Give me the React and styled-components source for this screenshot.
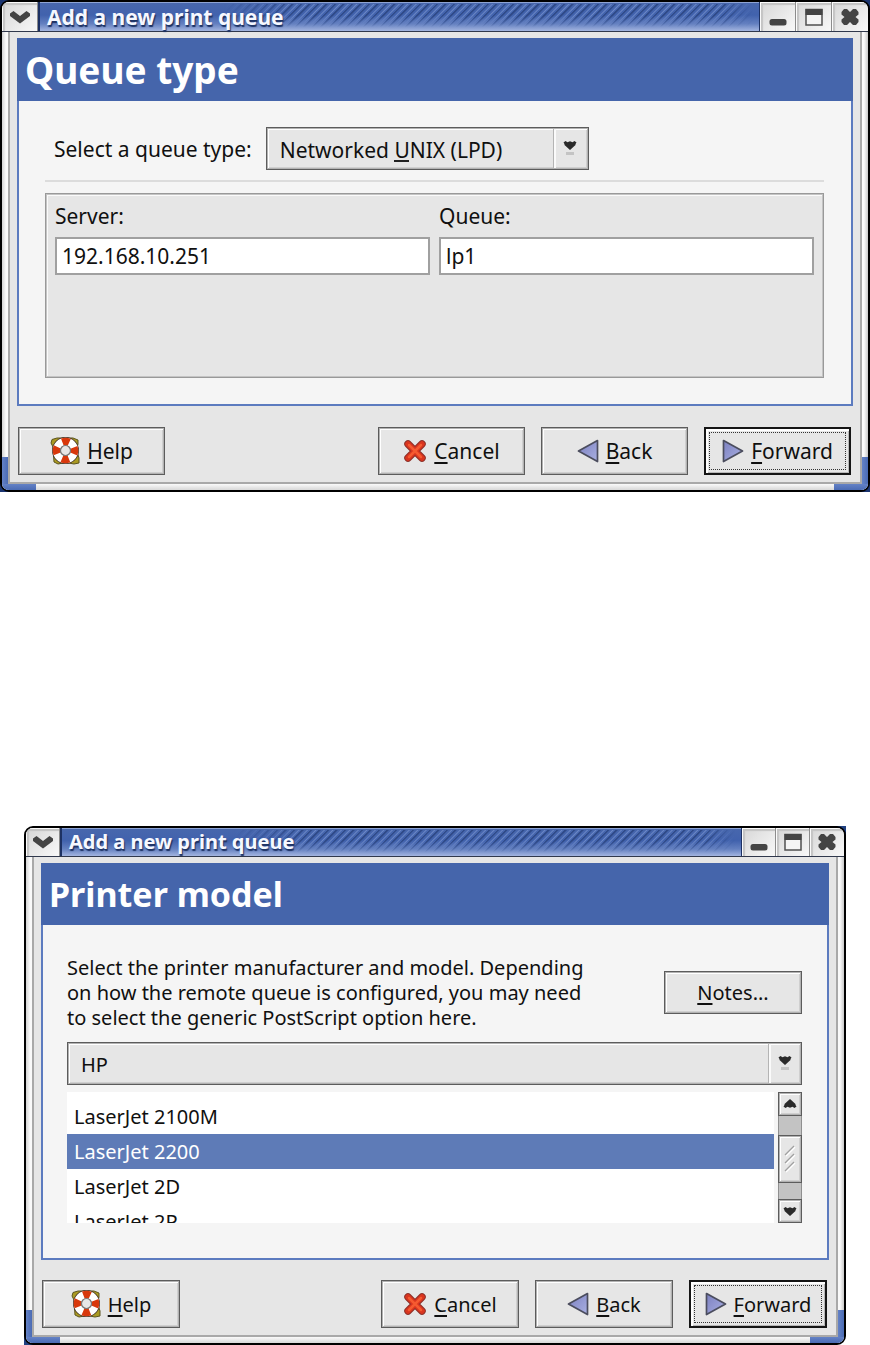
import React, { useId } from "react";
import styled, { createGlobalStyle, css, ThemeProvider } from "styled-components";

const GlobalStyle = createGlobalStyle`
  * {
    box-sizing: border-box;
  }
  body {
    margin: 0;
    background: #fff;
    color: #101010;
    font-family: "Noto Sans", "Open Sans", sans-serif;
  }
`;

const large = {
  text: 21,
  title: 21,
  heading: 37,
  titleBar: 29,
  windowButton: 36,
  header: 63,
  button: 147,
  arrow: 34,
  footerGap: 21,
};

const medium = {
  text: 20,
  title: 20,
  heading: 34,
  titleBar: 28,
  windowButton: 34,
  header: 62,
  button: 138,
  arrow: 32,
  footerGap: 20,
};

const bevel = css`
  border: 1px solid #5c5c5c;
  box-shadow: inset 0 0 0 1px #b2b2b2, inset 1px 1px 0 1px #fff,
    inset -1px -1px 0 1px #cfcfcf;
`;

const Page = styled.main`
  display: flex;
  flex-direction: column;
  gap: 334px;
`;

const Backdrop = styled.section`
  margin: 0 ${(p) => (p.$inset ? 24 : 0)}px;
  background: ${(p) =>
    p.$inset
      ? "linear-gradient(90deg, #fff 50%, #1f3f80 50%) top / 100% 50% no-repeat, linear-gradient(90deg, #1f3f80 50%, #fff 50%) bottom / 100% 50% no-repeat"
      : "#1a3470"};
`;

const Frame = styled.div`
  border: 2px solid #000;
  border-radius: 9px;
  overflow: hidden;
  background: #f2f2f2;
`;

const TitleBar = styled.header`
  display: flex;
  height: ${(p) => p.theme.titleBar}px;
`;

const Title = styled.h2`
  flex: 1;
  display: flex;
  align-items: center;
  margin: 0;
  padding-left: 7px;
  border: solid #1d3163;
  border-width: 0 1px 0 2px;
  box-shadow: inset 0 1px 0 #8ea4d4;
  background: linear-gradient(#4867ad, #4162ad 45%, #6480c0 75%, #a3b5e0);
  color: #f6f8ff;
  font-size: ${(p) => p.theme.title}px;
  line-height: 24px;
  text-shadow: 1px 2px 1px #1d3163;
  white-space: nowrap;
`;

const Stripes = styled.span`
  flex: 1;
  align-self: stretch;
  margin: 2px 6px 4px -60px;
  background: repeating-linear-gradient(
    135deg,
    #2f4a88 0 1px,
    transparent 2px 3px,
    #6c88c6 4px,
    transparent 5px 6px
  );
  mask-image: linear-gradient(90deg, transparent, #000 70px, #000 94%, transparent),
    linear-gradient(#000 50%, transparent);
  mask-composite: intersect;
`;

const TitleText = styled.span`
  position: relative;
  z-index: 1;
`;

const WindowButton = styled.button`
  display: grid;
  place-items: center;
  width: ${(p) => p.theme.windowButton}px;
  padding: 0;
  border: solid #8c8c8c;
  border-width: 0 1px 0 0;
  box-shadow: inset 1px 1px 0 #fbfbfb, inset 3px 3px 1px #c4c4c4;
  background: linear-gradient(135deg, #d6d6d6, #f8f8f8);

  &:last-child {
    border-right: 0;
  }
`;

const Sides = styled.div`
  padding: 0 6px 6px;
  border-top: 1px solid #30384c;
  background: linear-gradient(#6482c6, #4a6bb4) left bottom / 34px 6px no-repeat,
    linear-gradient(#6482c6, #4a6bb4) right bottom / 34px 6px no-repeat,
    linear-gradient(90deg, #6482c6, #4a6bb4) left bottom / 6px 33px no-repeat,
    linear-gradient(90deg, #6482c6, #4a6bb4) right bottom / 6px 33px no-repeat,
    linear-gradient(#fafafa, #d8d8d8) bottom / 100% 6px no-repeat,
    linear-gradient(90deg, #d4d4d4, #fafafa 4px, #ececec 50%, #fafafa calc(100% - 4px), #c8c8c8);
`;

const Client = styled.div`
  padding: 6px 7px 7px;
  border: solid #a9a9a9;
  border-width: 0 2px 2px;
  background: #e6e6e6;
`;

const Panel = styled.div`
  border: 2px solid #5c7bbf;
  background: #f5f5f5;
`;

const Heading = styled.h1`
  display: flex;
  align-items: center;
  height: ${(p) => p.theme.header}px;
  margin: -2px -2px 0;
  padding: 0 9px 0 8px;
  background: #4565ab;
  color: #fff;
  font-size: ${(p) => p.theme.heading}px;
  line-height: 48px;
`;

const QueueBody = styled.div`
  padding: 26px 27px 26px 26px;
`;

const FieldRow = styled.div`
  display: flex;
  align-items: center;
  gap: 14px;
  padding-left: 9px;
`;

const Label = styled.label`
  font-size: ${(p) => p.theme.text}px;
  line-height: 28px;
`;

const Rule = styled.hr`
  height: 2px;
  margin: 10px 0 11px;
  border: 0;
  background: #dcdcdc;
`;

const Group = styled.div`
  display: grid;
  grid-template-columns: 1fr 1fr;
  align-content: start;
  gap: 9px;
  min-height: 185px;
  padding: 8px 9px;
  border: 1px solid #999;
  box-shadow: inset 0 0 0 1px #c4c4c4, inset 1px 1px 0 1px #fafafa;
  background: #e6e6e6;
`;

const Field = styled.div`
  display: flex;
  flex-direction: column;
  gap: 7px;
`;

const TextInput = styled.input`
  width: 100%;
  height: 38px;
  padding: 0 5px;
  border: 2px solid #a0a0a0;
  border-radius: 0;
  background: #fff;
  color: inherit;
  font: inherit;
  font-size: ${(p) => p.theme.text}px;
`;

const SelectBox = styled.div`
  position: relative;
  width: ${(p) => (p.$wide ? "100%" : "323px")};
`;

const Select = styled.select`
  ${bevel}
  display: block;
  width: 100%;
  height: 43px;
  padding: 2px 40px 0 13px;
  border-radius: 0;
  appearance: none;
  background: #e6e6e6;
  color: inherit;
  font: inherit;
  font-size: ${(p) => p.theme.text}px;
`;

const SelectArrow = styled.span`
  position: absolute;
  top: 2px;
  right: 2px;
  bottom: 2px;
  display: grid;
  place-items: center;
  width: ${(p) => p.theme.arrow}px;
  border-left: 1px solid #b4b4b4;
  box-shadow: inset 2px 0 0 #fafafa;
  pointer-events: none;
`;

const Mnemonic = styled.span`
  position: absolute;
  left: 128px;
  bottom: 8px;
  width: 15px;
  height: 2px;
  background: #222;
  pointer-events: none;
`;

const Button = styled.button`
  ${bevel}
  display: flex;
  align-items: center;
  justify-content: center;
  gap: 7px;
  width: ${(p) => p.theme.button}px;
  height: ${(p) => p.$height || 48}px;
  padding: 0;
  background: #e6e6e6;
  color: inherit;
  font: inherit;
  font-size: ${(p) => p.theme.text}px;

  u {
    text-decoration-thickness: 2px;
    text-underline-offset: 3px;
  }

  ${(p) =>
    p.$focused &&
    css`
      border: 2px solid #151515;
      box-shadow: inset 2px 2px 0 #fff, inset -1px -1px 0 #b8b8b8;
      outline: 1px dotted #333;
      outline-offset: -6px;
    `}
`;

const Footer = styled.footer`
  display: flex;
  gap: 16px;
  padding: ${(p) => p.theme.footerGap}px 2px 0 1px;

  button:first-child {
    margin-right: auto;
  }
`;

const ModelBody = styled.div`
  padding: 30px 25px 35px 24px;
`;

const Intro = styled.div`
  display: flex;
  align-items: center;
  justify-content: space-between;
  margin-bottom: 12px;
`;

const Paragraph = styled.p`
  margin: 0;
  font-size: ${(p) => p.theme.text}px;
  line-height: 25px;
`;

const ListArea = styled.div`
  display: flex;
  gap: 4px;
  height: 131px;
  margin-top: 7px;
`;

const List = styled.ul`
  flex: 1;
  margin: 0;
  padding: 7px 0 0;
  overflow: hidden;
  background: #fff;
  list-style: none;
`;

const Item = styled.li`
  padding: 0 7px;
  background: ${(p) => (p.$selected ? "#5e7bb7" : "transparent")};
  color: ${(p) => (p.$selected ? "#fff" : "inherit")};
  font-size: ${(p) => p.theme.text}px;
  line-height: 35px;
`;

const Scrollbar = styled.div`
  display: flex;
  flex-direction: column;
  width: 24px;
  border: solid #8f8f8f;
  border-width: 0 1px;
  background: #c3c3c3;
`;

const ScrollButton = styled.button`
  ${bevel}
  display: grid;
  place-items: center;
  height: 24px;
  margin: 0 -1px;
  padding: 0;
  background: #e6e6e6;
`;

const Thumb = styled.div`
  ${bevel}
  display: grid;
  place-items: center;
  height: 48px;
  margin: 19px -1px auto;
  background: #e6e6e6;
`;

const MenuGlyph = () => (
  <svg width="24" height="16" viewBox="0 0 24 16" aria-hidden="true">
    <path d="M2 4.500 5.500 2l6.500 5L18.500 2 22 4.500v2.500L12 14.500 2 7z" fill="#444" />
  </svg>
);

const MinimizeGlyph = () => (
  <svg width="20" height="20" viewBox="0 0 20 20" aria-hidden="true">
    <rect x="1.500" y="12" width="17" height="6.500" rx="2.500" fill="#444" />
  </svg>
);

const MaximizeGlyph = () => (
  <svg width="20" height="20" viewBox="0 0 20 20" aria-hidden="true">
    <rect x="2" y="2.500" width="16" height="15.500" fill="#f4f4f4" stroke="#505050" strokeWidth="1.500" />
    <path d="M1.500 2h17v6h-17z" fill="#444" />
  </svg>
);

const CloseGlyph = () => (
  <svg width="20" height="20" viewBox="0 0 20 20" aria-hidden="true">
    <path
      d="M1.500 5 4 2h3l3 3 3-3h3l2.500 3v2.500L15.500 10l3 2.500V15L16 18h-3l-3-3-3 3H4l-2.500-3v-2.500l3-2.500-3-2.500z"
      fill="#444"
    />
  </svg>
);

const ArrowGlyph = ({ up }) => (
  <svg width="14" height="10" viewBox="0 0 14 10" aria-hidden="true">
    <path
      d={
        up
          ? "M7 0 1.500 5v1L.5 7.500 2.500 9l2-1.200L7 8.800l2.500-1 2 1.200 2-1.500-1-1.500V5z"
          : "M7 10 1.500 5V4L.5 2.500 2.500 1l2 1.200L7 1.200l2.500 1 2-1.200 2 1.500-1 1.500v1z"
      }
      fill="#2a2a2a"
    />
  </svg>
);

const SelectGlyph = () => (
  <svg width="14" height="22" viewBox="0 0 14 22" aria-hidden="true">
    <path d="M7 12 1.500 7V6L.5 4.500 2.500 3l2 1.200L7 3.200l2.500 1 2-1.200 2 1.500-1 1.500v1z" fill="#2a2a2a" />
    <path d="M3 14h8v3H3z" fill="#c4c4c4" />
  </svg>
);

const GripGlyph = () => (
  <svg width="14" height="30" viewBox="0 0 14 30" aria-hidden="true">
    <path d="m3 12 9-9M3 20l9-9M3 28l9-9" stroke="#fff" strokeWidth="1.500" />
    <path d="m2 11 9-9M2 19l9-9M2 27l9-9" stroke="#a0a0a0" strokeWidth="1.300" />
  </svg>
);

const HelpIcon = () => (
  <svg width="30" height="28" viewBox="0 0 30 28" aria-hidden="true">
    <path
      d="M2 2.500 7 1l16 0 5 2v4l-1.500 6L29 21v5l-5 1-8-1.500L8 27l-4-2-.5-7L4 12 1 6z"
      fill="#aa9a22"
      stroke="#5c5520"
    />
    <circle cx="15.500" cy="13.500" r="9" fill="none" stroke="#3b2a22" strokeWidth="9" />
    <circle cx="15.500" cy="13.500" r="9" fill="none" stroke="#fff" strokeWidth="7.500" />
    <circle
      cx="15.500"
      cy="13.500"
      r="9"
      fill="none"
      stroke="#d8380c"
      strokeWidth="7.500"
      strokeDasharray="7.070 7.070"
      strokeDashoffset="3.530"
    />
    <circle cx="15.500" cy="13.500" r="5" fill="#e6e6e6" stroke="#777" strokeWidth="1.200" />
  </svg>
);

const CancelIcon = () => (
  <svg width="24" height="24" viewBox="0 0 24 24" strokeLinecap="round" aria-hidden="true">
    <path d="m5 5 14 14M19 5 5 19" stroke="#8c3028" strokeWidth="7.500" />
    <path d="m5 5 14 14M19 5 5 19" stroke="#d9351f" strokeWidth="5.500" />
    <path d="m6 6 12 12M18 6 6 18" stroke="#f55a30" strokeWidth="2.500" />
  </svg>
);

const Triangle = ({ forward }) => {
  const id = useId();
  return (
    <svg width="22" height="24" viewBox="0 0 22 24" aria-hidden="true">
      <linearGradient id={id} x1="0" y1="0" x2="1" y2="1">
        <stop offset="0" stopColor="#7c80c0" />
        <stop offset="1" stopColor="#a9b0e2" />
      </linearGradient>
      <path
        d={forward ? "M1.500 1.500 20.500 12l-19 10.500z" : "M20.500 1.500 1.500 12l19 10.500z"}
        fill={`url(#${id})`}
        stroke="#4b4d5e"
        strokeWidth="1.700"
        strokeLinejoin="round"
      />
    </svg>
  );
};

const DialogWindow = ({ theme, inset, heading, children }) => (
  <ThemeProvider theme={theme}>
    <Backdrop $inset={inset}>
      <Frame>
        <TitleBar>
          <WindowButton aria-label="Window menu">
            <MenuGlyph />
          </WindowButton>
          <Title>
            <TitleText>Add a new print queue</TitleText>
            <Stripes />
          </Title>
          <WindowButton aria-label="Minimize">
            <MinimizeGlyph />
          </WindowButton>
          <WindowButton aria-label="Maximize">
            <MaximizeGlyph />
          </WindowButton>
          <WindowButton aria-label="Close">
            <CloseGlyph />
          </WindowButton>
        </TitleBar>
        <Sides>
          <Client>
            <Panel>
              <Heading>{heading}</Heading>
              {children}
            </Panel>
            <Footer>
              <Button>
                <HelpIcon />
                <span>
                  <u>H</u>elp
                </span>
              </Button>
              <Button>
                <CancelIcon />
                <span>
                  <u>C</u>ancel
                </span>
              </Button>
              <Button>
                <Triangle />
                <span>
                  <u>B</u>ack
                </span>
              </Button>
              <Button $focused>
                <Triangle forward />
                <span>
                  <u>F</u>orward
                </span>
              </Button>
            </Footer>
          </Client>
        </Sides>
      </Frame>
    </Backdrop>
  </ThemeProvider>
);

const models = ["LaserJet 2100M", "LaserJet 2200", "LaserJet 2D", "LaserJet 2P"];

const App = () => {
  return (
    <Page>
      <GlobalStyle />
      <DialogWindow theme={large} heading="Queue type">
        <QueueBody>
          <FieldRow>
            <Label htmlFor="queue-type">Select a queue type:</Label>
            <SelectBox>
              <Select id="queue-type">
                <option>Networked UNIX (LPD)</option>
              </Select>
              <Mnemonic />
              <SelectArrow>
                <SelectGlyph />
              </SelectArrow>
            </SelectBox>
          </FieldRow>
          <Rule />
          <Group>
            <Field>
              <Label htmlFor="server">Server:</Label>
              <TextInput id="server" defaultValue="192.168.10.251" />
            </Field>
            <Field>
              <Label htmlFor="queue">Queue:</Label>
              <TextInput id="queue" defaultValue="lp1" />
            </Field>
          </Group>
        </QueueBody>
      </DialogWindow>
      <DialogWindow theme={medium} inset heading="Printer model">
        <ModelBody>
          <Intro>
            <Paragraph>
              Select the printer manufacturer and model. Depending
              <br />
              on how the remote queue is configured, you may need
              <br />
              to select the generic PostScript option here.
            </Paragraph>
            <Button $height={43}>
              <span>
                <u>N</u>otes...
              </span>
            </Button>
          </Intro>
          <SelectBox $wide>
            <Select aria-label="Manufacturer">
              <option>HP</option>
            </Select>
            <SelectArrow>
              <SelectGlyph />
            </SelectArrow>
          </SelectBox>
          <ListArea>
            <List role="listbox" aria-label="Model">
              {models.map((model) => (
                <Item
                  key={model}
                  role="option"
                  aria-selected={model === "LaserJet 2200"}
                  $selected={model === "LaserJet 2200"}
                >
                  {model}
                </Item>
              ))}
            </List>
            <Scrollbar>
              <ScrollButton aria-label="Scroll up">
                <ArrowGlyph up />
              </ScrollButton>
              <Thumb>
                <GripGlyph />
              </Thumb>
              <ScrollButton aria-label="Scroll down">
                <ArrowGlyph />
              </ScrollButton>
            </Scrollbar>
          </ListArea>
        </ModelBody>
      </DialogWindow>
    </Page>
  );
};

export default App;
